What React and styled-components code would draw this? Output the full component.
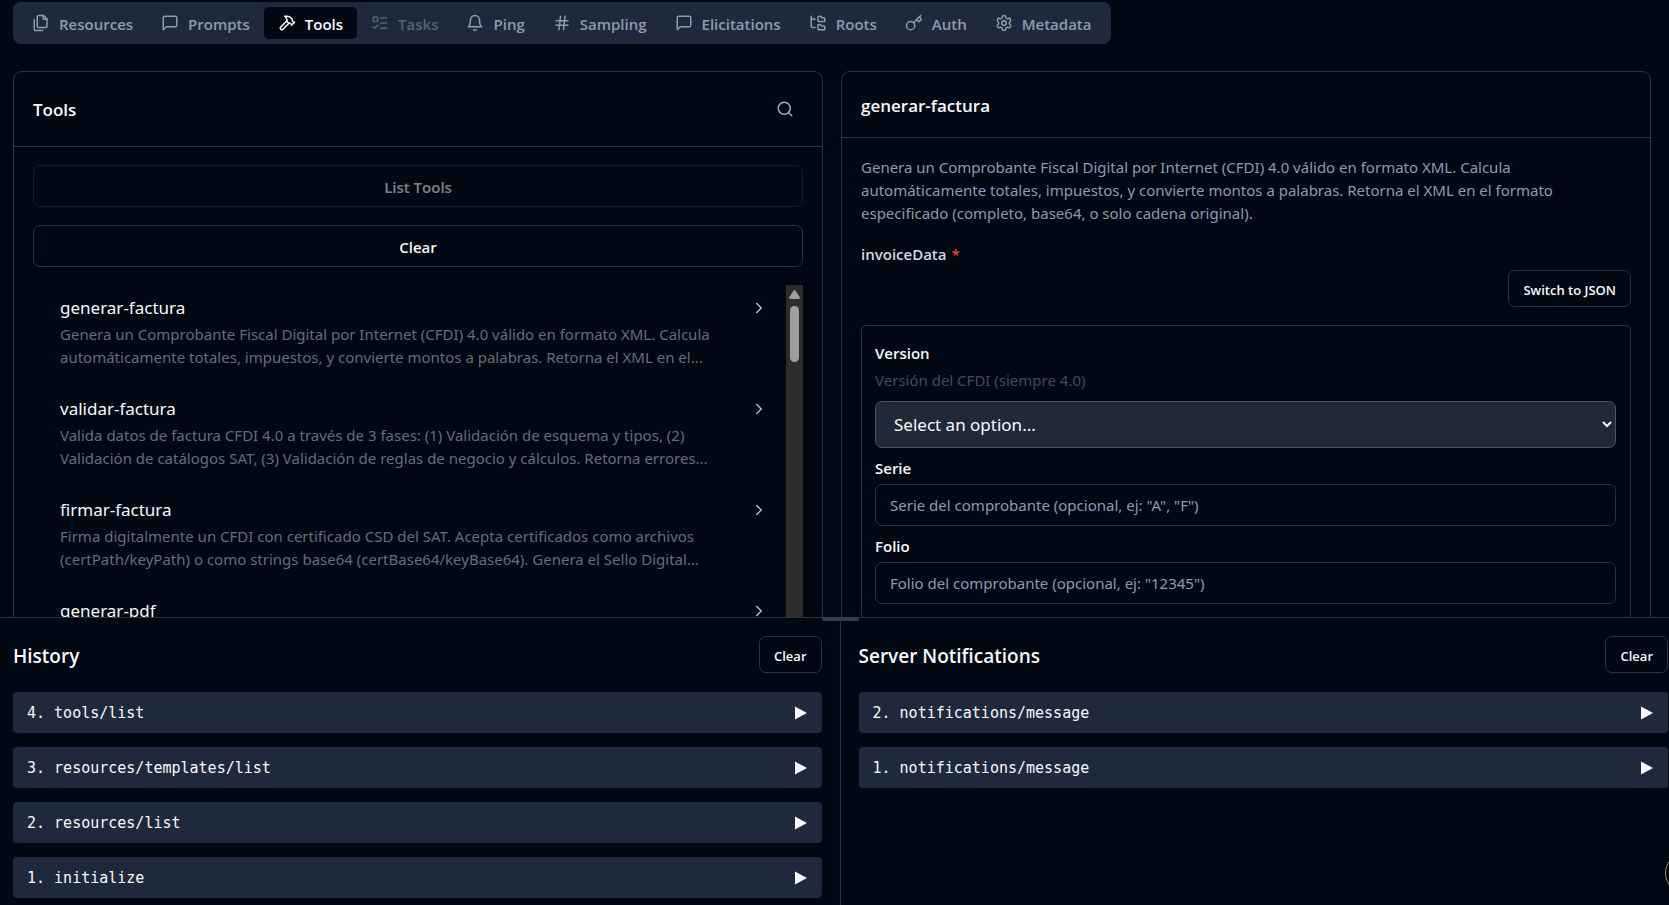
import React, {useState} from 'react';
import styled, {createGlobalStyle} from 'styled-components';
import {ChevronRight, FolderTree, Hash, Key, ListTodo, Search, Settings} from 'lucide-react';

const colors = {
    background: '#010713',
    muted: '#1e293b',
    border: '#2b3441',
    text: '#f8fafc',
    mutedText: '#8d9bb0',
};

const regularFont = '"Noto Sans", "Open Sans", sans-serif';
const boldFont = '"Open Sans", "Noto Sans", sans-serif';

const GlobalStyle = createGlobalStyle`
    * {
        box-sizing: border-box;
    }

    body {
        margin: 0;
        background-color: ${colors.background};
        color: ${colors.text};
        font-family: ${regularFont};
        font-size: 15px;
        line-height: 23px;
        color-scheme: dark;
    }

    button, input, select {
        font-family: inherit;
    }

    h2, h3, p, ul, ol {
        margin: 0;
        padding: 0;
        font-weight: inherit;
    }
`;

const Page = styled.div`
    height: 100vh;
    display: flex;
    flex-direction: column;
    overflow: hidden;
`;

const Main = styled.main`
    flex: 1;
    min-height: 0;
    overflow: hidden;
    padding: 2px 18px 0 13px;
`;

const TabList = styled.nav`
    display: inline-flex;
    padding: 5px;
    border-radius: 8px;
    background-color: ${colors.muted};
    margin-bottom: 27px;
`;

const Tab = styled.button`
    display: flex;
    align-items: center;
    gap: 9px;
    height: 32px;
    padding: 2px 14px 0;
    border: none;
    border-radius: 5px;
    background-color: ${props => props.$active ? colors.background : 'transparent'};
    color: ${props => props.$active ? colors.text : colors.mutedText};
    font-family: ${boldFont};
    font-size: 15px;
    font-weight: 600;
    line-height: 23px;

    &:disabled {
        opacity: 0.5;
    }

    svg {
        margin-bottom: 3px;
    }
`;

const Columns = styled.div`
    display: grid;
    grid-template-columns: 1fr 1fr;
    gap: 18px;
`;

const Panel = styled.section`
    min-width: 0;
    border: 1px solid ${colors.border};
    border-radius: 9px;
`;

const PanelHeader = styled.header`
    display: flex;
    align-items: center;
    justify-content: space-between;
    padding: ${props => props.$tall ? '24px 19px 22px' : '20px 19px 17px'};
    border-bottom: 1px solid ${colors.border};
`;

const PanelTitle = styled.h3`
    font-family: ${boldFont};
    font-size: 17px;
    font-weight: 600;
    line-height: 28px;
`;

const IconButton = styled.button`
    display: flex;
    padding: 4px 9px 6px;
    border: none;
    background: transparent;
    color: #a3adbd;
`;

const PanelBody = styled.div`
    padding: 18px 19px;
`;

const Button = styled.button`
    display: block;
    width: ${props => props.$wide ? '100%' : 'auto'};
    height: ${props => props.$wide ? '42px' : '37px'};
    padding: 2px 14px 0;
    border: 1px solid ${colors.border};
    border-radius: 7px;
    background-color: transparent;
    color: ${colors.text};
    font-family: ${boldFont};
    font-size: ${props => props.$wide ? '15px' : '13px'};
    font-weight: 600;

    &:disabled {
        opacity: 0.5;
    }
`;

const ToolActions = styled.div`
    display: flex;
    flex-direction: column;
    gap: 18px;
`;

const ToolScroll = styled.div`
    display: flex;
    height: 441px;
    margin-top: 18px;
`;

const ToolItems = styled.ul`
    flex: 1;
    min-width: 0;
    overflow: hidden;
    list-style: none;
`;

const ToolItem = styled.li`
    display: flex;
    align-items: flex-start;
    gap: 24px;
    padding: 8px 18px 17px 27px;
`;

const ToolText = styled.div`
    flex: 1;
    min-width: 0;
`;

const ToolName = styled.h3`
    font-size: 17px;
    line-height: 30px;
`;

const ToolDescription = styled.p`
    height: 46px;
    color: #656d7b;
    display: -webkit-box;
    -webkit-line-clamp: 2;
    -webkit-box-orient: vertical;
    overflow: hidden;
`;

const ItemArrow = styled(ChevronRight)`
    flex-shrink: 0;
    margin-top: 6px;
    color: #b6bdc8;
`;

const ScrollTrack = styled.div`
    width: 17px;
    padding-top: 5px;
    display: flex;
    flex-direction: column;
    align-items: center;
    gap: 7px;
    background-color: #2c2c2c;
`;

const ScrollThumb = styled.div`
    width: 9px;
    height: 56px;
    border-radius: 5px;
    background-color: #9f9f9f;
`;

const DetailText = styled.p`
    color: ${colors.mutedText};
    margin-bottom: 18px;
`;

const ParamHeader = styled.div`
    font-family: ${boldFont};
    font-weight: 600;
    color: #d5d9df;
    margin-bottom: 4px;
`;

const Required = styled.span`
    color: #ef4444;
    margin-left: 5px;
`;

const ActionRow = styled.div`
    display: flex;
    justify-content: flex-end;
    margin-bottom: 18px;
`;

const FieldSet = styled.div`
    display: flex;
    flex-direction: column;
    gap: 9px;
    padding: 16px 14px 14px 13px;
    border: 1px solid ${colors.border};
    border-radius: 5px;
`;

const Field = styled.div`
    display: flex;
    flex-direction: column;
`;

const FieldLabel = styled.label`
    font-family: ${boldFont};
    font-weight: 600;
    margin-bottom: 4px;
`;

const FieldHint = styled.p`
    color: #434b58;
    margin-bottom: 9px;
`;

const Select = styled.select`
    width: 100%;
    height: 47px;
    padding: 0 14px;
    border: 1px solid #4b5563;
    border-radius: 7px;
    background-color: #1f2937;
    color: ${colors.text};
    font-size: 17px;
`;

const Input = styled.input`
    width: 100%;
    height: 42px;
    padding: 0 14px;
    border: 1px solid ${colors.border};
    border-radius: 7px;
    background-color: transparent;
    color: ${colors.text};
    font-size: 15px;

    &::placeholder {
        color: ${colors.mutedText};
    }
`;

const Drawer = styled.div`
    position: relative;
    height: 288px;
    display: grid;
    grid-template-columns: calc(50% + 6px) 1fr;
    border-top: 1px solid ${colors.border};
`;

const DragHandle = styled.div`
    position: absolute;
    top: -1px;
    left: calc(50% - 13px);
    width: 37px;
    height: 4px;
    border-radius: 2px;
    background-color: #333d4b;
`;

const LogPane = styled.section`
    overflow: hidden;
    padding: ${props => props.$first ? '18px 18px 0 13px' : '18px 1px 0 18px'};
    border-right: ${props => props.$first ? `1px solid ${colors.border}` : 'none'};
`;

const LogHeader = styled.header`
    display: flex;
    align-items: center;
    justify-content: space-between;
    margin-bottom: 19px;
`;

const LogTitle = styled.h2`
    padding-top: 2px;
    font-family: ${boldFont};
    font-size: 19px;
    font-weight: 600;
    line-height: 32px;
`;

const LogList = styled.ol`
    display: flex;
    flex-direction: column;
    gap: 14px;
    list-style: none;
`;

const LogEntry = styled.button`
    display: flex;
    align-items: center;
    justify-content: space-between;
    width: 100%;
    height: 41px;
    padding: 1px 15px 0 14px;
    border: none;
    border-radius: 4px;
    background-color: ${colors.muted};
    color: ${colors.text};
    text-align: left;
`;

const LogMethod = styled.span`
    font-family: "DejaVu Sans Mono", monospace;
    font-size: 15px;
`;

const FloatingButton = styled.button`
    position: fixed;
    right: -36px;
    bottom: 12px;
    width: 40px;
    height: 40px;
    border: 1px solid #8d9a94;
    border-radius: 50%;
    background-color: #000;
`;

const TabIcon = ({children}) => (
    <svg
        width="18"
        height="18"
        viewBox="0 0 24 24"
        fill="none"
        stroke="currentColor"
        strokeWidth="2"
        strokeLinecap="round"
        strokeLinejoin="round"
        aria-hidden="true"
    >
        {children}
    </svg>
);

const FilesIcon = () => (
    <TabIcon>
        <path d="M15.5 2H8.6c-.4 0-.8.2-1.1.5-.3.3-.5.7-.5 1.1v12.8c0 .4.2.8.5 1.1.3.3.7.5 1.1.5h9.8c.4 0 .8-.2 1.1-.5.3-.3.5-.7.5-1.1V6.5L15.5 2z"/>
        <path d="M3 7.6v12.8c0 .4.2.8.5 1.1.3.3.7.5 1.1.5h9.8"/>
        <path d="M15 2v5h5"/>
    </TabIcon>
);

const MessageIcon = () => (
    <TabIcon>
        <path d="M21 15a2 2 0 0 1-2 2H7l-4 4V5a2 2 0 0 1 2-2h14a2 2 0 0 1 2 2z"/>
    </TabIcon>
);

const HammerIcon = () => (
    <TabIcon>
        <path d="m15 12-8.373 8.373a1 1 0 1 1-3-3L12 9"/>
        <path d="m18 15 4-4"/>
        <path d="m21.5 11.5-1.914-1.914A2 2 0 0 1 19 8.172V7l-2.26-2.26a6 6 0 0 0-4.202-1.756L9 2.96l.92.82A6.18 6.18 0 0 1 12 8.4V10l2 2h1.172a2 2 0 0 1 1.414.586L18.5 14.5"/>
    </TabIcon>
);

const BellIcon = () => (
    <TabIcon>
        <path d="M6 8a6 6 0 0 1 12 0c0 7 3 9 3 9H3s3-2 3-9"/>
        <path d="M10.3 21a1.94 1.94 0 0 0 3.4 0"/>
    </TabIcon>
);

const tabs = [
    {name: 'Resources', icon: FilesIcon},
    {name: 'Prompts', icon: MessageIcon},
    {name: 'Tools', icon: HammerIcon},
    {name: 'Tasks', icon: ListTodo, disabled: true},
    {name: 'Ping', icon: BellIcon},
    {name: 'Sampling', icon: Hash},
    {name: 'Elicitations', icon: MessageIcon},
    {name: 'Roots', icon: FolderTree},
    {name: 'Auth', icon: Key},
    {name: 'Metadata', icon: Settings},
];

const tools = [
    {
        name: 'generar-factura',
        description: 'Genera un Comprobante Fiscal Digital por Internet (CFDI) 4.0 válido en formato XML. Calcula automáticamente totales, impuestos, y convierte montos a palabras. Retorna el XML en el...',
    },
    {
        name: 'validar-factura',
        description: 'Valida datos de factura CFDI 4.0 a través de 3 fases: (1) Validación de esquema y tipos, (2) Validación de catálogos SAT, (3) Validación de reglas de negocio y cálculos. Retorna errores...',
    },
    {
        name: 'firmar-factura',
        description: 'Firma digitalmente un CFDI con certificado CSD del SAT. Acepta certificados como archivos (certPath/keyPath) o como strings base64 (certBase64/keyBase64). Genera el Sello Digital...',
    },
    {
        name: 'generar-pdf',
        description: '',
    },
];

const history = ['tools/list', 'resources/templates/list', 'resources/list', 'initialize'];
const notifications = ['notifications/message', 'notifications/message'];

const PlayIcon = () => (
    <svg width="12" height="14" viewBox="0 0 12 14" aria-hidden="true">
        <path d="M0 0.5 L12 7 L0 13.5 Z" fill="currentColor"/>
    </svg>
);

const ScrollUpIcon = () => (
    <svg width="11" height="9" viewBox="0 0 11 9" aria-hidden="true">
        <path d="M4.6 0.6 Q5.5 -0.4 6.4 0.6 L10.7 7.2 Q11.2 9 9.8 9 H1.2 Q-0.2 9 0.3 7.2 Z" fill="#9f9f9f"/>
    </svg>
);

const LogSection = ({title, entries, first}) => (
    <LogPane $first={first}>
        <LogHeader>
            <LogTitle>{title}</LogTitle>
            <Button>Clear</Button>
        </LogHeader>
        <LogList>
            {entries.map((entry, index) => (
                <li key={index}>
                    <LogEntry>
                        <LogMethod>{entries.length - index}. {entry}</LogMethod>
                        <PlayIcon/>
                    </LogEntry>
                </li>
            ))}
        </LogList>
    </LogPane>
);

const App = () => {
    const [activeTab, setActiveTab] = useState('Tools');

    return (
        <Page>
            <GlobalStyle/>
            <Main>
                <TabList>
                    {tabs.map(({name, icon: Icon, disabled}) => (
                        <Tab
                            key={name}
                            $active={name === activeTab}
                            disabled={disabled}
                            onClick={() => setActiveTab(name)}
                        >
                            <Icon size={18}/>
                            {name}
                        </Tab>
                    ))}
                </TabList>
                <Columns>
                    <Panel>
                        <PanelHeader $tall>
                            <PanelTitle>Tools</PanelTitle>
                            <IconButton aria-label="Search">
                                <Search size={18}/>
                            </IconButton>
                        </PanelHeader>
                        <PanelBody>
                            <ToolActions>
                                <Button $wide disabled>List Tools</Button>
                                <Button $wide>Clear</Button>
                            </ToolActions>
                            <ToolScroll>
                                <ToolItems>
                                    {tools.map(tool => (
                                        <ToolItem key={tool.name}>
                                            <ToolText>
                                                <ToolName>{tool.name}</ToolName>
                                                <ToolDescription>{tool.description}</ToolDescription>
                                            </ToolText>
                                            <ItemArrow size={18}/>
                                        </ToolItem>
                                    ))}
                                </ToolItems>
                                <ScrollTrack>
                                    <ScrollUpIcon/>
                                    <ScrollThumb/>
                                </ScrollTrack>
                            </ToolScroll>
                        </PanelBody>
                    </Panel>
                    <Panel>
                        <PanelHeader>
                            <PanelTitle>generar-factura</PanelTitle>
                        </PanelHeader>
                        <PanelBody>
                            <DetailText>
                                Genera un Comprobante Fiscal Digital por Internet (CFDI) 4.0 válido en formato XML.
                                Calcula automáticamente totales, impuestos, y convierte montos a palabras. Retorna el
                                XML en el formato especificado (completo, base64, o solo cadena original).
                            </DetailText>
                            <ParamHeader>
                                invoiceData<Required>*</Required>
                            </ParamHeader>
                            <ActionRow>
                                <Button>Switch to JSON</Button>
                            </ActionRow>
                            <FieldSet>
                                <Field>
                                    <FieldLabel htmlFor="version">Version</FieldLabel>
                                    <FieldHint>Versión del CFDI (siempre 4.0)</FieldHint>
                                    <Select id="version" defaultValue="">
                                        <option value="">Select an option...</option>
                                    </Select>
                                </Field>
                                <Field>
                                    <FieldLabel htmlFor="serie">Serie</FieldLabel>
                                    <Input id="serie" placeholder={'Serie del comprobante (opcional, ej: "A", "F")'}/>
                                </Field>
                                <Field>
                                    <FieldLabel htmlFor="folio">Folio</FieldLabel>
                                    <Input id="folio" placeholder={'Folio del comprobante (opcional, ej: "12345")'}/>
                                </Field>
                            </FieldSet>
                        </PanelBody>
                    </Panel>
                </Columns>
            </Main>
            <Drawer>
                <DragHandle/>
                <LogSection title="History" entries={history} first/>
                <LogSection title="Server Notifications" entries={notifications}/>
            </Drawer>
            <FloatingButton aria-label="Help"/>
        </Page>
    );
};

export default App;
